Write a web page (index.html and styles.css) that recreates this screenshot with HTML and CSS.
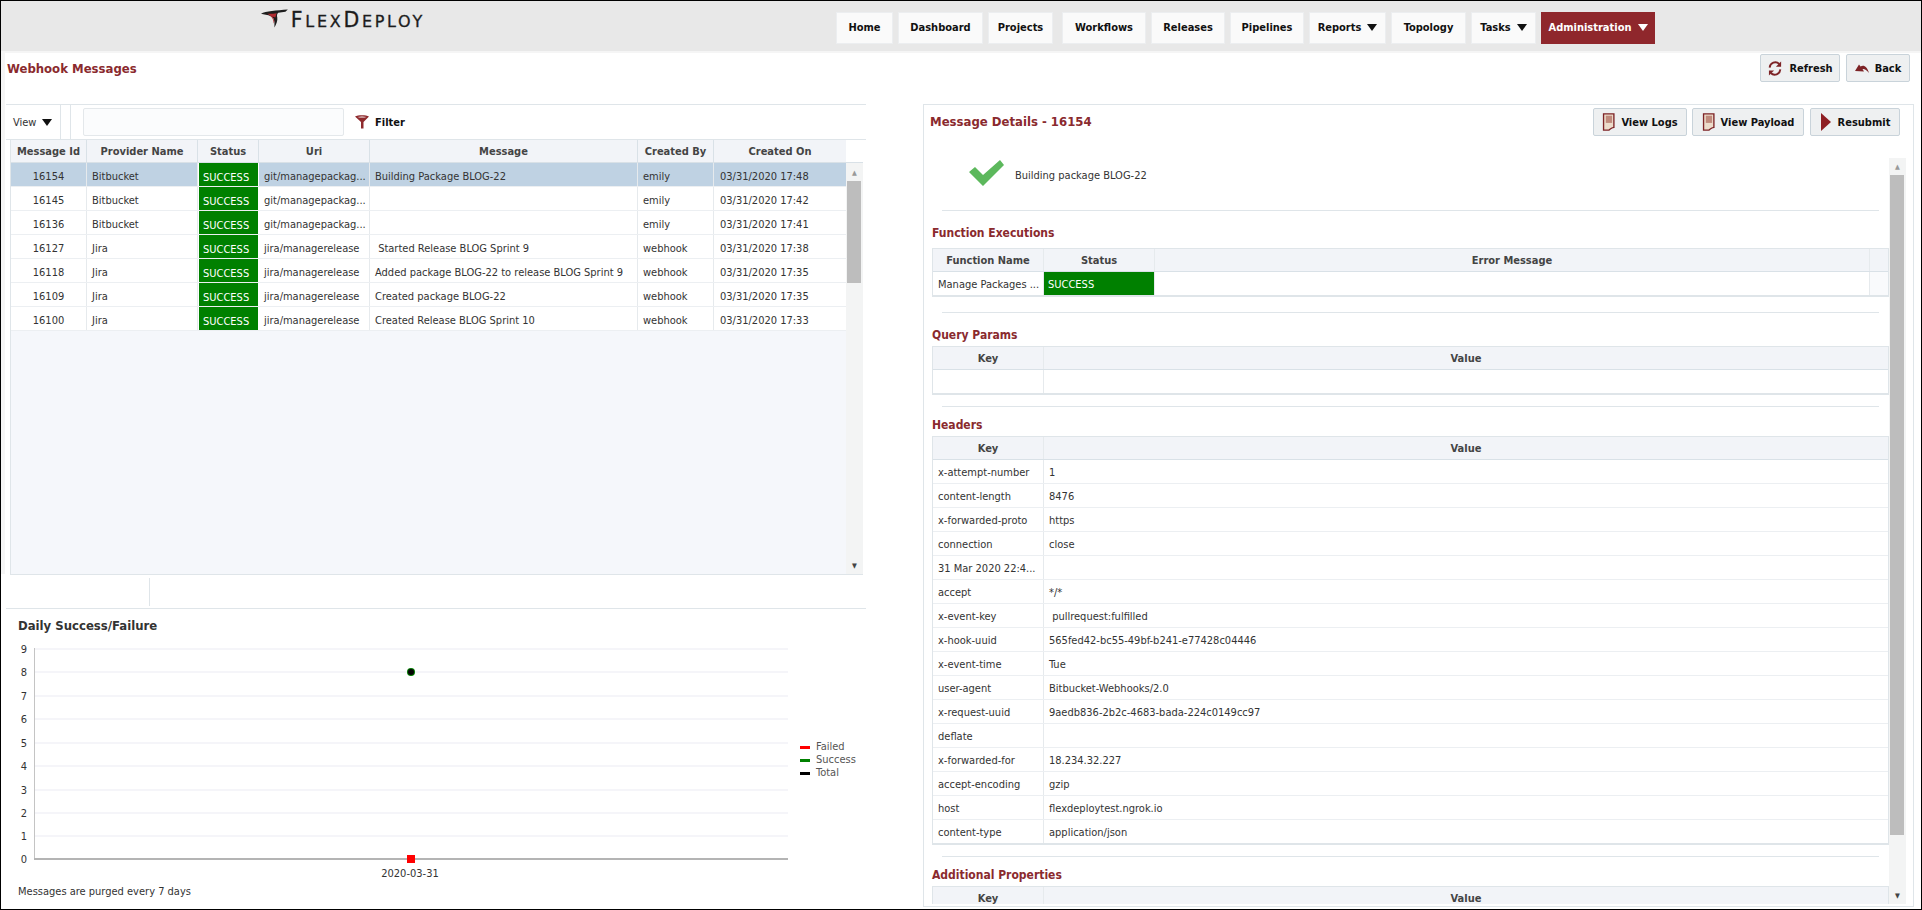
FILE: index.html
```html
<!DOCTYPE html>
<html lang="en">
<head>
<meta charset="utf-8">
<title>Webhook Messages</title>
<link rel="stylesheet" href="styles.css">
</head>
<body>
<div class="app">
  <header class="topbar">
    <div class="logo">
      <svg class="logo-mark" viewBox="0 0 28 19" width="28" height="19"><path d="M0 4.500C5 1.500 16 1 28 0l-2.500 2.500L18 3.500c-1.500 1.500-1.500 3-1 5 .5 3.500-1 7-3 10.500 0-3.500.5-6.500-1-9.500C12 8 9 6 5 5.500c-2-.3-3.500-.5-5-1z" fill="#1d1d1d"/><path d="M6.500 4.500c3.500.2 6.500 0 10-.5-1 1.500-1 3-1.500 4.500L12 7.500l2 4.500-.8 3c0-3-.7-5-2.200-7-1-1.200-2.500-2.500-4.500-3.500z" fill="#b02a30"/></svg>
      <span class="logo-text">F<span class="lc">lex</span>D<span class="lc">eploy</span></span>
    </div>
    <nav class="nav">
      <a class="nav-btn w-home">Home</a>
      <a class="nav-btn w-dash">Dashboard</a>
      <a class="nav-btn w-proj">Projects</a>
      <a class="nav-btn w-work">Workflows</a>
      <a class="nav-btn w-rel">Releases</a>
      <a class="nav-btn w-pipe">Pipelines</a>
      <a class="nav-btn w-rep">Reports <i class="tri"></i></a>
      <a class="nav-btn w-top">Topology</a>
      <a class="nav-btn w-task">Tasks <i class="tri"></i></a>
      <a class="nav-btn nav-admin">Administration <i class="tri tri-w"></i></a>
    </nav>
  </header>

  <div class="titlebar">
    <h1 class="page-title">Webhook Messages</h1>
    <div class="btn-row">
      <button class="btn w-refresh">
        <svg class="ic" viewBox="0 0 16 16" width="16" height="15"><path d="M2.300 7A6 6 0 0 1 12.500 3.200" fill="none" stroke="#7d2326" stroke-width="2"/><path d="M14.500 .5v5.500h-5.500z" fill="#7d2326"/><path d="M13.700 9A6 6 0 0 1 3.500 12.800" fill="none" stroke="#7d2326" stroke-width="2"/><path d="M1.500 15.500v-5.500h5.500z" fill="#7d2326"/></svg>
        Refresh</button>
      <button class="btn w-back">
        <svg class="ic" viewBox="0 0 14 10" width="14" height="10"><path d="M0 8 4 1.500 5.500 3.500C8.500 1.500 12 3 14 10 11.500 6.500 9 5.500 7.500 6L9 8.500z" fill="#7d2326"/></svg>
        Back</button>
    </div>
  </div>

  <main class="columns">
    <section class="left">
      <div class="toolbar">
        <span class="view">View <i class="tri"></i></span>
        <span class="tool-sep"></span>
        <span class="search"></span>
        <svg class="funnel" viewBox="0 0 16 16" width="16" height="16"><path d="M1 2.500C4 .8 12 .8 15 2.500L9.500 8v6.500H7V8z" fill="#8f2a2d"/><path d="M3.500 3c2.500.8 6.500.8 9 0-2.500-.8-6.500-.8-9 0z" fill="#fff"/></svg>
        <b class="filter-label">Filter</b>
      </div>

      <div class="grid-wrap">
        <div class="grid">
          <div class="row head">
            <div class="c c-id">Message Id</div><div class="c c-prov">Provider Name</div><div class="c c-st">Status</div><div class="c c-uri">Uri</div><div class="c c-msg">Message</div><div class="c c-by">Created By</div><div class="c c-on">Created On</div>
          </div>
          <div class="row sel">
            <div class="c c-id">16154</div><div class="c c-prov">Bitbucket</div><div class="c c-st ok">SUCCESS</div><div class="c c-uri">git/managepackag...</div><div class="c c-msg">Building Package BLOG-22</div><div class="c c-by">emily</div><div class="c c-on">03/31/2020 17:48</div>
          </div>
          <div class="row">
            <div class="c c-id">16145</div><div class="c c-prov">Bitbucket</div><div class="c c-st ok">SUCCESS</div><div class="c c-uri">git/managepackag...</div><div class="c c-msg"></div><div class="c c-by">emily</div><div class="c c-on">03/31/2020 17:42</div>
          </div>
          <div class="row">
            <div class="c c-id">16136</div><div class="c c-prov">Bitbucket</div><div class="c c-st ok">SUCCESS</div><div class="c c-uri">git/managepackag...</div><div class="c c-msg"></div><div class="c c-by">emily</div><div class="c c-on">03/31/2020 17:41</div>
          </div>
          <div class="row">
            <div class="c c-id">16127</div><div class="c c-prov">Jira</div><div class="c c-st ok">SUCCESS</div><div class="c c-uri">jira/managerelease</div><div class="c c-msg">&nbsp;Started Release BLOG Sprint 9</div><div class="c c-by">webhook</div><div class="c c-on">03/31/2020 17:38</div>
          </div>
          <div class="row">
            <div class="c c-id">16118</div><div class="c c-prov">Jira</div><div class="c c-st ok">SUCCESS</div><div class="c c-uri">jira/managerelease</div><div class="c c-msg">Added package BLOG-22 to release BLOG Sprint 9</div><div class="c c-by">webhook</div><div class="c c-on">03/31/2020 17:35</div>
          </div>
          <div class="row">
            <div class="c c-id">16109</div><div class="c c-prov">Jira</div><div class="c c-st ok">SUCCESS</div><div class="c c-uri">jira/managerelease</div><div class="c c-msg">Created package BLOG-22</div><div class="c c-by">webhook</div><div class="c c-on">03/31/2020 17:35</div>
          </div>
          <div class="row">
            <div class="c c-id">16100</div><div class="c c-prov">Jira</div><div class="c c-st ok">SUCCESS</div><div class="c c-uri">jira/managerelease</div><div class="c c-msg">Created Release BLOG Sprint 10</div><div class="c c-by">webhook</div><div class="c c-on">03/31/2020 17:33</div>
          </div>
        </div>
        <div class="vscroll">
          <div class="vs-head"></div>
          <div class="vs-up vs-up-left">▲</div>
          <div class="vs-thumb vs-thumb-left"></div>
          <div class="vs-space"></div>
          <div class="vs-down">▼</div>
        </div>
      </div>

      <div class="pager"><span class="pager-cell"></span></div>

      <div class="chart-box">
        <h2 class="chart-title">Daily Success/Failure</h2>
        <svg class="chart" width="860" height="245" viewBox="0 0 860 245">
          <g class="gridlines">
            <rect x="34" y="10" width="754" height="2"/><rect x="34" y="33" width="754" height="2"/><rect x="34" y="57" width="754" height="2"/><rect x="34" y="80" width="754" height="2"/><rect x="34" y="104" width="754" height="2"/><rect x="34" y="127" width="754" height="2"/><rect x="34" y="151" width="754" height="2"/><rect x="34" y="174" width="754" height="2"/><rect x="34" y="197" width="754" height="2"/>
          </g>
          <rect x="34" y="10" width="1" height="212" fill="#c4c4c4"/>
          <rect x="34" y="220" width="754" height="2" fill="#b4b4b4"/>
          <g class="ticks">
            <text x="24" y="15">9</text><text x="24" y="38">8</text><text x="24" y="62">7</text><text x="24" y="85">6</text><text x="24" y="109">5</text><text x="24" y="132">4</text><text x="24" y="156">3</text><text x="24" y="179">2</text><text x="24" y="202">1</text><text x="24" y="225">0</text>
          </g>
          <circle cx="411" cy="34" r="4" fill="#007a00"/>
          <circle cx="411" cy="34" r="3" fill="#050505"/>
          <rect x="407" y="217" width="8" height="8" fill="#f00"/>
          <text class="ticks" x="410" y="239">2020-03-31</text>
          <rect x="800" y="108" width="10" height="3" fill="#f00"/><text class="legend" x="816" y="112">Failed</text>
          <rect x="800" y="121" width="10" height="3" fill="#008000"/><text class="legend" x="816" y="125">Success</text>
          <rect x="800" y="134" width="10" height="3" fill="#000"/><text class="legend" x="816" y="138">Total</text>
        </svg>
        <p class="purged">Messages are purged every 7 days</p>
      </div>
    </section>

    <section class="right">
      <div class="right-head">
        <h2 class="details-title">Message Details - 16154</h2>
        <div class="btn-row-2">
          <button class="btn w-logs"><svg class="ic" viewBox="0 0 14 20" width="13" height="18"><path d="M1.500 1H13v15c-3 .5-4 2-5.500 3H1.500z" fill="#ecdccb" stroke="#7d2326" stroke-width="1.500"/><rect x="4" y="3" width="7" height="8" fill="#c08a7c"/></svg>View Logs</button>
          <button class="btn w-payload"><svg class="ic" viewBox="0 0 14 20" width="13" height="18"><path d="M1.500 1H13v15c-3 .5-4 2-5.500 3H1.500z" fill="#ecdccb" stroke="#7d2326" stroke-width="1.500"/><rect x="4" y="3" width="7" height="8" fill="#c08a7c"/></svg>View Payload</button>
          <button class="btn w-resubmit"><svg class="ic" viewBox="0 0 12 18" width="12" height="18"><path d="M1 0 11 9 1 18z" fill="#8f1f24"/></svg>Resubmit</button>
        </div>
      </div>

      <div class="scroller">
        <div class="content">
          <div class="status-line">
            <svg viewBox="0 0 36 27" width="36" height="27"><path d="M0 12 6 7 14 15 31 0 35 5 14 26z" fill="#5cb85c"/></svg>
            <span>Building package BLOG-22</span>
          </div>
          <hr class="rule rule-first">

          <h3 class="sec sec-fn">Function Executions</h3>
          <div class="kv fn">
            <div class="kv-row head"><div class="k">Function Name</div><div class="s">Status</div><div class="e">Error Message</div><div class="pad"></div></div>
            <div class="kv-row"><div class="k">Manage Packages ...</div><div class="s ok-l">SUCCESS</div><div class="e"></div><div class="pad"></div></div>
          </div>
          <hr class="rule rule-wide">

          <h3 class="sec sec-q">Query Params</h3>
          <div class="kv">
            <div class="kv-row head"><div class="k">Key</div><div class="v">Value</div></div>
            <div class="kv-row"><div class="k"></div><div class="v"></div></div>
          </div>
          <hr class="rule">

          <h3 class="sec">Headers</h3>
          <div class="kv">
            <div class="kv-row head"><div class="k">Key</div><div class="v">Value</div></div>
            <div class="kv-row"><div class="k">x-attempt-number</div><div class="v">1</div></div>
            <div class="kv-row"><div class="k">content-length</div><div class="v">8476</div></div>
            <div class="kv-row"><div class="k">x-forwarded-proto</div><div class="v">https</div></div>
            <div class="kv-row"><div class="k">connection</div><div class="v">close</div></div>
            <div class="kv-row"><div class="k">31 Mar 2020 22:4...</div><div class="v"></div></div>
            <div class="kv-row"><div class="k">accept</div><div class="v">*/*</div></div>
            <div class="kv-row"><div class="k">x-event-key</div><div class="v">&nbsp;pullrequest:fulfilled</div></div>
            <div class="kv-row"><div class="k">x-hook-uuid</div><div class="v">565fed42-bc55-49bf-b241-e77428c04446</div></div>
            <div class="kv-row"><div class="k">x-event-time</div><div class="v">Tue</div></div>
            <div class="kv-row"><div class="k">user-agent</div><div class="v">Bitbucket-Webhooks/2.0</div></div>
            <div class="kv-row"><div class="k">x-request-uuid</div><div class="v">9aedb836-2b2c-4683-bada-224c0149cc97</div></div>
            <div class="kv-row"><div class="k">deflate</div><div class="v"></div></div>
            <div class="kv-row"><div class="k">x-forwarded-for</div><div class="v">18.234.32.227</div></div>
            <div class="kv-row"><div class="k">accept-encoding</div><div class="v">gzip</div></div>
            <div class="kv-row"><div class="k">host</div><div class="v">flexdeploytest.ngrok.io</div></div>
            <div class="kv-row"><div class="k">content-type</div><div class="v">application/json</div></div>
          </div>
          <hr class="rule">

          <h3 class="sec">Additional Properties</h3>
          <div class="kv">
            <div class="kv-row head"><div class="k">Key</div><div class="v">Value</div></div>
          </div>
        </div>
        <div class="vscroll vscroll-r">
          <div class="vs-up">▲</div>
          <div class="vs-thumb vs-thumb-right"></div>
          <div class="vs-space"></div>
          <div class="vs-down">▼</div>
        </div>
      </div>
    </section>
  </main>
</div>
</body>
</html>
```

FILE: styles.css
```css
* { box-sizing: border-box; }
html, body { margin: 0; padding: 0; height: 100%; }
body {
  font-family: "DejaVu Sans Condensed", "DejaVu Sans", sans-serif;
  font-size: 11px;
  color: #333;
  background: #fff;
  overflow: hidden;
}
.app {
  width: 1922px;
  height: 910px;
  border: 1px solid #000;
  display: flex;
  flex-direction: column;
  overflow: hidden;
}

/* top bar */
.topbar {
  height: 50px;
  flex: none;
  background: #e8e8e8;
  display: flex;
  align-items: flex-start;
}
.logo {
  width: 164px;
  flex: none;
  display: flex;
  align-items: flex-start;
  margin: 8px 0 0 260px;
  gap: 3px;
}
.logo-text {
  font-family: "DejaVu Sans", sans-serif;
  font-size: 20.500px;
  line-height: 22px;
  color: #1c1c1c;
  letter-spacing: 2.700px;
  white-space: nowrap;
  -webkit-text-stroke: 0.300px #1c1c1c;
}
.lc { font-size: 16px; text-transform: uppercase; }
.nav {
  display: flex;
  gap: 5px;
  margin: 11px 0 0 411px;
}
.nav-btn {
  height: 32px;
  padding-bottom: 2px;
  background: #fafafa;
  border: 1px solid #eceef0;
  color: #111;
  font-weight: 700;
  display: flex;
  align-items: center;
  justify-content: center;
  gap: 6px;
  white-space: nowrap;
}
.w-home { width: 57px; }
.w-dash { width: 85px; }
.w-proj { width: 65px; }
.w-work { width: 84px; margin-left: 4px; }
.w-rel { width: 74px; }
.w-pipe { width: 74px; }
.w-rep { width: 77px; }
.w-top { width: 75px; }
.w-task { width: 65px; }
.nav-admin {
  width: 114px;
  background: #8f272c;
  border-color: #8f272c;
  color: #fff;
}
.tri {
  display: inline-block;
  width: 0;
  height: 0;
  border-left: 5px solid transparent;
  border-right: 5px solid transparent;
  border-top: 7px solid #111;
}
.tri-w { border-top-color: #fff; }

/* title row */
.titlebar {
  flex: none;
  height: 53px;
  display: flex;
  justify-content: space-between;
  padding-top: 3px;
  background: linear-gradient(#f5f5f5, #f5f5f5) 0 0 / 100% 2px no-repeat,
              linear-gradient(#f5f5f5, #f5f5f5) 0 0 / 4px 100% no-repeat;
}
.page-title {
  margin: 7px 0 0 6px;
  font-size: 13px;
  line-height: 16px;
  font-weight: 700;
  color: #8a2a2e;
}
.btn-row {
  display: flex;
  gap: 6px;
  padding-right: 11px;
}
.btn {
  height: 28px;
  padding: 0;
  border: 1px solid #c9d3da;
  border-radius: 2px;
  background: #eef0f1;
  color: #111;
  font: 700 11px "DejaVu Sans Condensed", "DejaVu Sans", sans-serif;
  display: flex;
  align-items: center;
  justify-content: center;
  gap: 6px;
}
.w-refresh { width: 80px; }
.w-back { width: 64px; }
.w-logs { width: 94px; }
.w-payload { width: 112px; }
.w-resubmit { width: 90px; margin-left: 1px; }

/* two columns */
.columns {
  flex: 1;
  min-height: 0;
  display: flex;
  background: linear-gradient(#f5f5f5, #f5f5f5) 0 0 / 4px 470px no-repeat;
}
.left {
  width: 860px;
  margin-left: 5px;
  flex: none;
  display: flex;
  flex-direction: column;
}
.toolbar {
  height: 36px;
  flex: none;
  border-top: 1px solid #dfe5e9;
  border-bottom: 1px solid #dfe5e9;
  display: flex;
  align-items: center;
}
.view {
  width: 55px;
  height: 100%;
  border-right: 1px solid #dfe5e9;
  padding-left: 7px;
  display: flex;
  align-items: center;
  gap: 6px;
}
.tool-sep {
  width: 10px;
  height: 100%;
  border-right: 1px solid #dfe5e9;
}
.search {
  width: 261px;
  height: 28px;
  margin-left: 12px;
  background: #fbfcfd;
  border: 1px solid #e4e8eb;
  border-radius: 2px;
}
.funnel { margin-left: 10px; }
.filter-label { margin-left: 5px; color: #111; }

.grid-wrap {
  height: 435px;
  flex: none;
  margin-left: 4px;
  margin-right: 3px;
  display: flex;
  background: #f5f7fb;
  border-left: 1px solid #dfe5e9;
  border-bottom: 1px solid #dfe5e9;
}
.grid { width: 835px; flex: none; }
.row {
  display: flex;
  height: 24px;
  background: #fff;
  border-bottom: 1px solid #eceff2;
}
.row.head {
  height: 23px;
  background: #f2f4f8;
  font-weight: 700;
  color: #444;
  border-bottom: 1px solid #d9e1e7;
}
.row.sel { background: #bfd2e3; }
.c {
  display: flex;
  align-items: center;
  padding: 3px 5px 0;
  border-right: 1px solid #e6eaed;
  white-space: nowrap;
  overflow: hidden;
}
.head .c { justify-content: center; padding: 0; border-right-color: #d9e1e7; }
.c-id { width: 76px; justify-content: center; }
.c-prov { width: 111px; }
.c-st { width: 61px; }
.c-uri { width: 111px; }
.c-msg { width: 268px; }
.c-by { width: 76px; }
.c-on { width: 132px; border-right: 0; padding-left: 6px; }
.row:not(.head) .ok {
  background: #008000;
  color: #fff;
  font-weight: 400;
  border: 1px solid #fff;
  border-width: 0 1px;
  padding: 6px 0 0 4px;
}
.vscroll {
  flex: 1;
  display: flex;
  flex-direction: column;
  background: #f3f4f4;
  color: #444;
  font-size: 7px;
  text-align: center;
  line-height: 12px;
}
.vs-head { height: 23px; background: #fff; border-bottom: 1px solid #d9e1e7; flex: none; }
.vs-up { height: 17px; flex: none; padding-top: 3px; color: #999; }
.vs-up-left { height: 18px; padding-top: 4px; }
.vs-down { height: 14px; flex: none; }
.vs-space { flex: 1; }
.vs-thumb { background: #bdbdbd; margin: 0 2px 0 1px; flex: none; }
.vs-thumb-left { height: 102px; }
.vs-thumb-right { height: 660px; }

.pager {
  height: 31px;
  flex: none;
  margin-top: 3px;
  border-bottom: 1px solid #dfe5e9;
  padding-bottom: 2px;
}
.pager-cell {
  display: block;
  width: 144px;
  height: 28px;
  border-right: 1px solid #dfe5e9;
}
.chart-box { padding: 9px 0 0 12px; }
.chart-title {
  margin: 0;
  font-size: 13px;
  line-height: 16px;
  font-weight: 700;
  color: #333;
}
.chart { display: block; margin: 4px 0 0 -18px; }
.gridlines rect { fill: #f5f5f9; }
.ticks, .ticks text { font: 11px "DejaVu Sans Condensed", "DejaVu Sans", sans-serif; fill: #333; text-anchor: middle; }
.legend { font: 11px "DejaVu Sans Condensed", "DejaVu Sans", sans-serif; fill: #555; }
.purged { margin: 2px 0 0; line-height: 14px; color: #333; }

/* right */
.right {
  width: 991px;
  margin-left: 57px;
  flex: none;
  height: 803px;
  border: 1px solid #dfe5e9;
  display: flex;
  flex-direction: column;
}
.right-head {
  height: 53px;
  flex: none;
  display: flex;
  justify-content: space-between;
  align-items: flex-start;
  padding: 3px 13px 0 6px;
}
.details-title {
  margin: 6px 0 0;
  font-size: 13px;
  line-height: 16px;
  font-weight: 700;
  color: #8a2a2e;
}
.btn-row-2 { display: flex; gap: 5px; }
.scroller {
  flex: 1;
  min-height: 0;
  display: flex;
  overflow: hidden;
  padding-bottom: 2px;
}
.content {
  width: 965px;
  flex: none;
  padding-left: 8px;
  overflow: hidden;
}
.status-line {
  height: 52px;
  padding: 2px 0 0 37px;
  display: flex;
  gap: 10px;
  align-items: flex-start;
}
.status-line span { margin-top: 9px; color: #333; }
.rule {
  margin: 11px 0 0 10px;
  width: 937px;
  border: 0;
  height: 1px;
  background: #dfe5e9;
}
.rule-first { margin-top: 0; }
.rule-wide { margin-top: 15px; }
.sec {
  margin: 11px 0 4px;
  font-size: 12px;
  line-height: 14px;
  font-weight: 700;
  color: #8a2a2e;
}
.sec-fn { margin: 15px 0 8px; }
.sec-q { margin-top: 15px; }
.kv {
  width: 957px;
  border: 1px solid #dfe5e9;
  border-width: 1px 1px 2px;
}
.kv-row {
  display: flex;
  height: 24px;
  background: #fff;
  border-bottom: 1px solid #eceff2;
}
.kv-row:last-child { border-bottom: 0; height: 23px; }
.kv-row.head {
  height: 23px;
  background: #f2f4f8;
  font-weight: 700;
  color: #444;
  border-bottom: 1px solid #d9e1e7;
}
.kv-row > div {
  display: flex;
  align-items: center;
  padding: 2px 5px 0;
  white-space: nowrap;
  overflow: hidden;
}
.kv-row.head > div { justify-content: center; padding: 0 5px; }
.kv-row .k { width: 111px; border-right: 1px solid #e6eaed; flex: none; }
.kv-row .s { width: 111px; border-right: 1px solid #e6eaed; flex: none; }
.kv-row .e { width: 714px; flex: none; }
.kv-row .pad { flex: 1; background: #f9fafc; border-left: 1px solid #e6eaed; }
.kv-row .v { flex: 1; }
.kv-row .ok-l { background: #008000; color: #fff; font-weight: 400; padding-left: 4px; }
.head .pad { background: #f2f4f8; }
.vscroll-r { width: 17px; flex: none; }
```
